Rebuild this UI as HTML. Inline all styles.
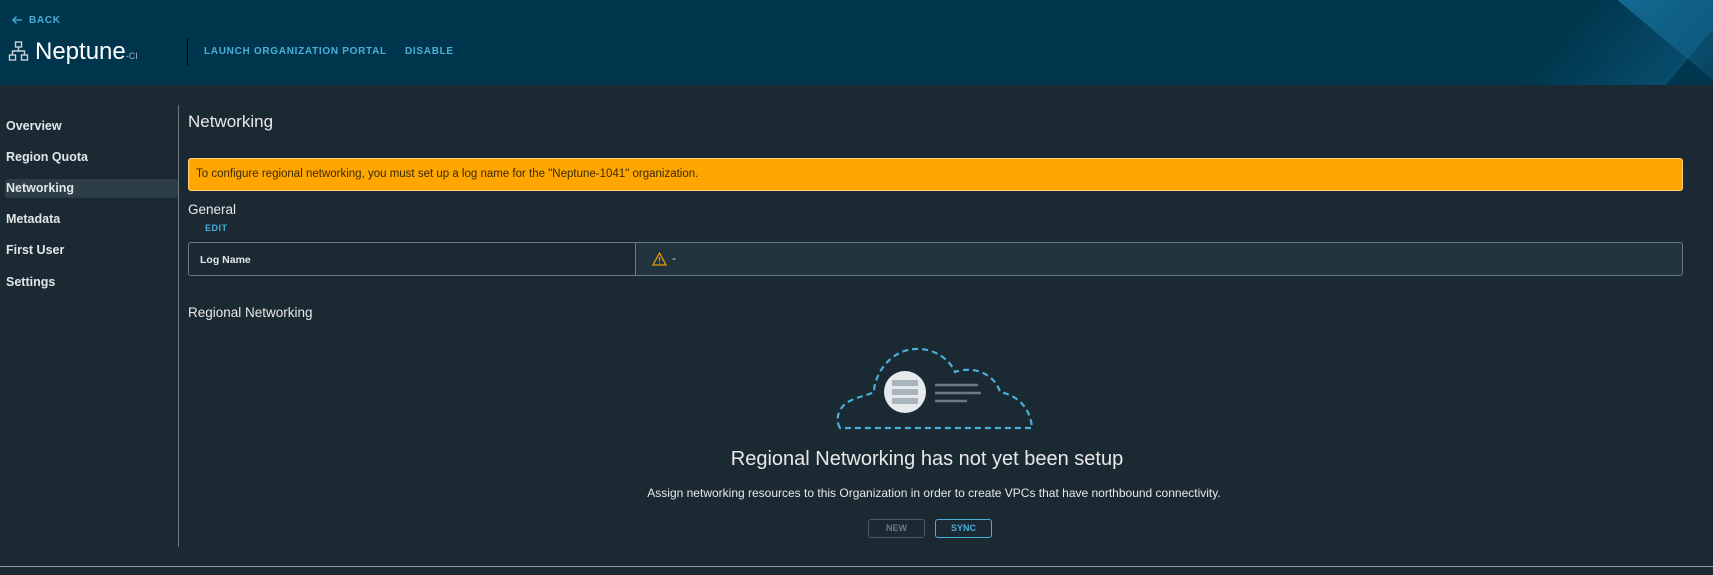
<!DOCTYPE html>
<html><head><style>
*{margin:0;padding:0;box-sizing:border-box}
body{width:1713px;height:575px;background:#1b2a32;font-family:"Liberation Sans",sans-serif;position:relative;overflow:hidden;color:#e8e8e8}
.a{position:absolute;white-space:nowrap}
header{position:absolute;left:0;top:0;width:1713px;height:85px;background:#00364d;overflow:hidden}
.nav{font-size:12.5px;font-weight:bold;color:#e1e6e8}
.lnk{color:#49afd9;font-weight:bold;font-size:10px;letter-spacing:.7px}
</style></head><body>
<header>
<div class="a" style="left:1560px;top:-60px;width:110px;height:240px;background:linear-gradient(90deg,rgba(0,54,77,0),rgba(10,86,120,.7));transform:rotate(40deg)"></div>
<div class="a" style="left:1660px;top:-80px;width:110px;height:180px;background:linear-gradient(180deg,rgba(27,122,168,.8),rgba(0,54,77,0));transform:rotate(-50deg)"></div>
<svg class="a" style="left:11px;top:15px" width="12" height="10" viewBox="0 0 12 10"><path d="M11 5H2M5.5 1.5L2 5l3.5 3.5" stroke="#49afd9" stroke-width="1.3" fill="none"/></svg>
<div class="a lnk" style="left:29px;top:15px">BACK</div>
<svg class="a" style="left:8px;top:41px" width="21" height="21" viewBox="0 0 20 21"><g stroke="#c5d1d6" stroke-width="1.4" fill="none"><rect x="7" y="1" width="6" height="5"/><rect x="1" y="14" width="6" height="5"/><rect x="13" y="14" width="6" height="5"/><path d="M10 6v4M4 14v-4h12v4"/></g></svg>
<div class="a" style="left:35px;top:38px;font-size:24px;color:#fff">Neptune<span style="font-size:9px;color:#aab">-CI</span></div>
<div class="a" style="left:187px;top:38px;width:1px;height:28px;background:#000"></div>
<div class="a lnk" style="left:204px;top:46px">LAUNCH ORGANIZATION PORTAL</div>
<div class="a lnk" style="left:405px;top:46px">DISABLE</div>
</header>
<div class="a nav" style="left:6px;top:119px">Overview</div>
<div class="a nav" style="left:6px;top:150px">Region Quota</div>
<div class="a" style="left:5px;top:179px;width:173px;height:19px;background:#2d3e47;border-radius:3px"></div>
<div class="a nav" style="left:6px;top:181px">Networking</div>
<div class="a nav" style="left:6px;top:212px">Metadata</div>
<div class="a nav" style="left:6px;top:243px">First User</div>
<div class="a nav" style="left:6px;top:275px">Settings</div>
<div class="a" style="left:178px;top:105px;width:1px;height:442px;background:#6b7a80"></div>
<div class="a" style="left:188px;top:112px;font-size:17px;color:#e8e8e8">Networking</div>
<div class="a" style="left:188px;top:158px;width:1495px;height:33px;background:#ffa600;border:1px solid #ffd27a;border-radius:3px;color:#3a2a00;font-size:11.5px;padding:9px 0 0 7px">To configure regional networking, you must set up a log name for the "Neptune-1041" organization.</div>
<div class="a" style="left:188px;top:202px;font-size:13.5px">General</div>
<div class="a lnk" style="left:205px;top:223px;font-size:9px;letter-spacing:.5px">EDIT</div>
<div class="a" style="left:188px;top:242px;width:1495px;height:34px;border:1px solid #6b7a80;border-radius:3px;overflow:hidden">
<div class="a" style="left:446px;top:0;width:1050px;height:34px;background:#21333c;border-left:1px solid #6b7a80"></div>
<div class="a" style="left:11px;top:11px;font-size:10.5px;font-weight:bold;color:#e1e6e8">Log Name</div>
<svg class="a" style="left:463px;top:9px" width="15" height="14" viewBox="0 0 15 14"><path d="M7.5 1L14 13H1z" stroke="#e69b00" stroke-width="1.3" fill="none"/><path d="M7.5 5v4M7.5 10.5v1" stroke="#e69b00" stroke-width="1.3"/></svg>
<div class="a" style="left:483px;top:8px;font-size:12px;color:#ddd">-</div>
</div>
<div class="a" style="left:188px;top:305px;font-size:13.5px">Regional Networking</div>
<svg class="a" style="left:834px;top:345px" width="202" height="90" viewBox="834 345 202 90">
<path d="M840 428 C835 420 838 408 848 402 C856 397 866 396 874 392 C874 375 890 350 915 349 C935 348 950 360 955 372 C975 365 995 375 1000 392 C1015 395 1030 405 1032 428 Z" fill="none" stroke="#49afd9" stroke-width="2.2" stroke-dasharray="6 4"/>
<circle cx="905" cy="392" r="21" fill="#e6eaec"/>
<g fill="#aab5bb"><rect x="892" y="380" width="26" height="6"/><rect x="892" y="389" width="26" height="6"/><rect x="892" y="398" width="26" height="6"/></g>
<g stroke="#6b7a80" stroke-width="2.5"><path d="M935 385h43M935 393h46M935 401h32"/></g>
</svg>
<div class="a" style="left:730px;top:448px;width:394px;text-align:center;font-size:20px;color:#e8e8e8">Regional Networking has not yet been setup</div>
<div class="a" style="left:594px;top:486px;width:680px;text-align:center;font-size:12px;color:#e8e8e8">Assign networking resources to this Organization in order to create VPCs that have northbound connectivity.</div>
<div class="a" style="left:868px;top:519px;width:57px;height:19px;border:1px solid #4a5a62;border-radius:3px;color:#6b7a80;font-size:9px;font-weight:bold;text-align:center;line-height:17px">NEW</div>
<div class="a" style="left:935px;top:519px;width:57px;height:19px;border:1px solid #49afd9;border-radius:3px;color:#49afd9;font-size:9px;font-weight:bold;text-align:center;line-height:17px">SYNC</div>
<div class="a" style="left:0;top:566px;width:1713px;height:1px;background:#8c9ba1"></div>
</body></html>
